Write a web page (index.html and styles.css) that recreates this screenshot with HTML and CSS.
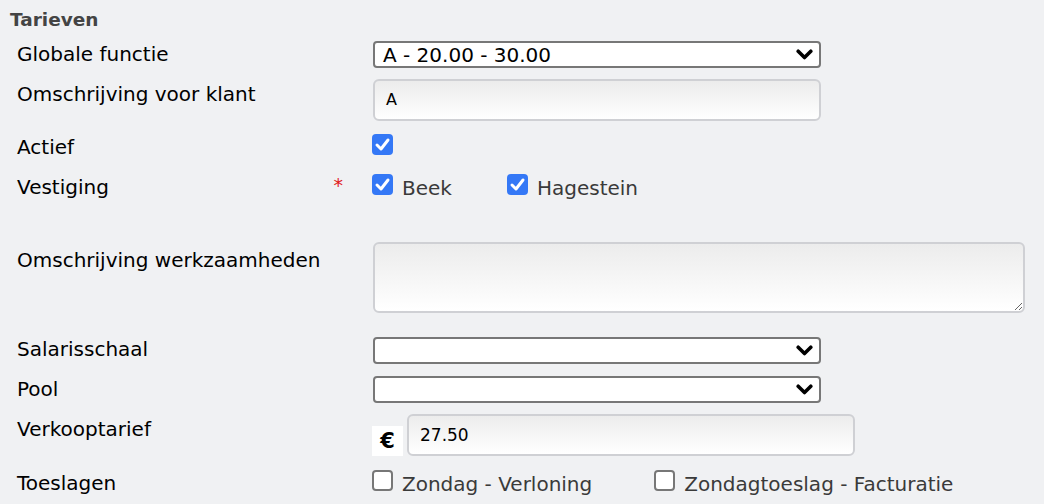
FILE: index.html
```html
<!DOCTYPE html>
<html lang="nl">
<head>
<meta charset="utf-8">
<title>Tarieven</title>
<link rel="stylesheet" href="styles.css">
</head>
<body>
<div class="form">
  <div class="legend">Tarieven</div>

  <div class="row r1">
    <div class="label mid">Globale functie</div>
    <div class="select"><span class="sel-text">A - 20.00 - 30.00</span><svg class="chev" viewBox="0 0 17 11" width="17" height="11"><path d="M2.2 2.2 L8.5 8.5 L14.8 2.2" fill="none" stroke="#000" stroke-width="3.6" stroke-linecap="round" stroke-linejoin="round"/></svg></div>
  </div>

  <div class="row r2">
    <div class="label p3">Omschrijving voor klant</div>
    <div class="input"><span class="in-text">A</span></div>
  </div>

  <div class="row r3">
    <div class="label p1">Actief</div>
    <div class="options">
      <span class="cb checked"><svg viewBox="0 0 21 21" width="21" height="21"><path d="M5 11 L9 15 L16 6" fill="none" stroke="#fff" stroke-width="3" stroke-linecap="round" stroke-linejoin="round"/></svg></span>
    </div>
  </div>

  <div class="row r4">
    <div class="label p1 req">Vestiging<span class="star">*</span></div>
    <div class="options">
      <label class="opt"><span class="cb checked"><svg viewBox="0 0 21 21" width="21" height="21"><path d="M5 11 L9 15 L16 6" fill="none" stroke="#fff" stroke-width="3" stroke-linecap="round" stroke-linejoin="round"/></svg></span><span class="opt-text">Beek</span></label>
      <label class="opt"><span class="cb checked"><svg viewBox="0 0 21 21" width="21" height="21"><path d="M5 11 L9 15 L16 6" fill="none" stroke="#fff" stroke-width="3" stroke-linecap="round" stroke-linejoin="round"/></svg></span><span class="opt-text">Hagestein</span></label>
    </div>
  </div>

  <div class="row r5">
    <div class="label p6">Omschrijving werkzaamheden</div>
    <textarea class="textarea"></textarea>
  </div>

  <div class="row r6">
    <div class="label p0">Salarisschaal</div>
    <div class="select"><span class="sel-text"></span><svg class="chev" viewBox="0 0 17 11" width="17" height="11"><path d="M2.2 2.2 L8.5 8.5 L14.8 2.2" fill="none" stroke="#000" stroke-width="3.6" stroke-linecap="round" stroke-linejoin="round"/></svg></div>
  </div>

  <div class="row r7">
    <div class="label p1">Pool</div>
    <div class="select"><span class="sel-text"></span><svg class="chev" viewBox="0 0 17 11" width="17" height="11"><path d="M2.2 2.2 L8.5 8.5 L14.8 2.2" fill="none" stroke="#000" stroke-width="3.6" stroke-linecap="round" stroke-linejoin="round"/></svg></div>
  </div>

  <div class="row r8">
    <div class="label p3">Verkooptarief</div>
    <div class="money">
      <span class="euro">€</span>
      <div class="input"><span class="in-text num">27.50</span></div>
    </div>
  </div>

  <div class="row r9">
    <div class="label p1">Toeslagen</div>
    <div class="options wide">
      <label class="opt"><span class="cb"></span><span class="opt-text">Zondag - Verloning</span></label>
      <label class="opt"><span class="cb"></span><span class="opt-text">Zondagtoeslag - Facturatie</span></label>
    </div>
  </div>
</div>
</body>
</html>
```

FILE: styles.css
```css
html, body {
  margin: 0;
  padding: 0;
  background: #f0f1f3;
}
body {
  font-family: "DejaVu Sans", Verdana, sans-serif;
  color: #000;
  width: 1044px;
  height: 504px;
  overflow: hidden;
}
.form {
  padding: 9px 0 0 17px;
}
.legend {
  margin-left: -7px;
  font-weight: bold;
  font-size: 18.5px;
  line-height: 22px;
  color: #444;
}
.row {
  display: flex;
  align-items: flex-start;
}
.r1 { margin-top: 10px; height: 27px; }
.r2 { margin-top: 11px; height: 42px; }
.r3 { margin-top: 13px; height: 21px; }
.r4 { margin-top: 19px; height: 21px; }
.r5 { margin-top: 47px; height: 71px; }
.r6 { margin-top: 24px; height: 27px; }
.r7 { margin-top: 12px; height: 27px; }
.r8 { margin-top: 11px; height: 42px; }
.r9 { margin-top: 14px; height: 21px; }

.label {
  width: 356px;
  flex: none;
  font-size: 20px;
  line-height: 24px;
  box-sizing: border-box;
}
.label.mid { padding-top: 1px; }
.p0 { padding-top: 0; }
.p1 { padding-top: 1px; }
.p3 { padding-top: 3px; }
.p6 { padding-top: 6px; }
.req {
  display: flex;
  justify-content: space-between;
  padding-right: 30px;
}
.star {
  color: #e0201b;
  font-size: 19px;
  line-height: 19px;
  margin-top: 1px;
}

.select {
  width: 448px;
  height: 27px;
  box-sizing: border-box;
  border: 2px solid #777;
  border-radius: 4px;
  background: #fff;
  display: flex;
  align-items: center;
  justify-content: space-between;
  padding: 0 6px 0 8px;
}
.sel-text {
  font-size: 20px;
  line-height: 22px;
}
.chev { display: block; }

.input {
  width: 448px;
  height: 42px;
  box-sizing: border-box;
  border: 2px solid #cfd0d4;
  border-radius: 6px;
  background: linear-gradient(#ececec, #ffffff);
  display: flex;
  align-items: center;
  padding-left: 11px;
}
.in-text {
  font-size: 16px;
  line-height: 20px;
}
.in-text.num { font-size: 17px; }

.options {
  display: flex;
  align-items: flex-start;
  gap: 55px;
  margin-left: -1px;
}
.options.wide { gap: 62px; }
.opt {
  display: flex;
  align-items: flex-start;
  gap: 9px;
}
.opt-text {
  font-size: 20px;
  line-height: 24px;
  color: #3a3a3a;
  margin-top: 2px;
}
.cb {
  width: 21px;
  height: 21px;
  box-sizing: border-box;
  border-radius: 4px;
  border: 2px solid #777;
  background: #fff;
  display: block;
  flex: none;
}
.cb.checked {
  border: none;
  background: #3478f6;
}
.cb svg { display: block; }

.textarea {
  width: 652px;
  height: 71px;
  box-sizing: border-box;
  border: 2px solid #cfd0d4;
  border-radius: 6px;
  background: linear-gradient(#ececec, #ffffff);
  margin: 0;
  padding: 4px;
  font-family: inherit;
  resize: both;
}

.money {
  display: flex;
  align-items: flex-end;
  gap: 4px;
  margin-left: -1px;
}
.euro {
  width: 31px;
  height: 30px;
  background: #fff;
  font-weight: bold;
  font-size: 21px;
  line-height: 30px;
  text-align: center;
  display: block;
}
```
